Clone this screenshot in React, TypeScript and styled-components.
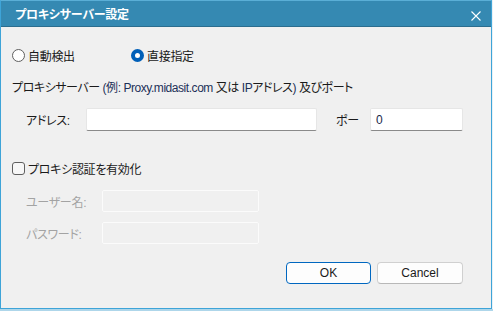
import styled, { createGlobalStyle } from "styled-components";

const GlobalStyle = createGlobalStyle`
  html, body {
    margin: 0;
    padding: 0;
    background: #e9f1f5;
  }
  body {
    font-family: "Liberation Sans", "Noto Sans CJK JP", sans-serif;
    font-size: 12px;
    color: #1a1a1a;
    font-feature-settings: "palt";
    letter-spacing: -0.3px;
  }
`;

export default function App() {
  return (
    <>
      <GlobalStyle />
      <Page>
        <Window>
          <TitleBar>
            <TitleText>プロキシサーバー設定</TitleText>
            <CloseIcon width="10" height="10" viewBox="0 0 10 10">
              <path d="M0.5 0.5 L9.5 9.5 M9.5 0.5 L0.5 9.5" stroke="#fff" strokeWidth="1.1" />
            </CloseIcon>
          </TitleBar>
          <Body>
            <RadioRow>
              <RadioItem $width={119}>
                <Radio $checked={false} />
                <span>自動検出</span>
              </RadioItem>
              <RadioItem>
                <Radio $checked />
                <span>直接指定</span>
              </RadioItem>
            </RadioRow>

            <ProxyLabel>
              プロキシサーバー <Example>(例: Proxy.midasit.com</Example> 又は{" "}
              <Example>IP</Example>アドレス<Example>)</Example> 及びポート
            </ProxyLabel>

            <FieldRow $top={12}>
              <FieldLabel $width={60}>アドレス:</FieldLabel>
              <TextInput $width={231} />
              <FieldLabel $width={34} style={{ marginLeft: 19 }}>
                ポー
              </FieldLabel>
              <TextInput $width={93}>0</TextInput>
            </FieldRow>

            <CheckRow>
              <CheckBox />
              <span>プロキシ認証を有効化</span>
            </CheckRow>

            <FieldRow $top={15}>
              <FieldLabel $width={76} $disabled>
                ユーザー名:
              </FieldLabel>
              <TextInput $width={157} $disabled />
            </FieldRow>

            <FieldRow $top={10}>
              <FieldLabel $width={76} $disabled>
                パスワード:
              </FieldLabel>
              <TextInput $width={157} $disabled />
            </FieldRow>

            <ButtonRow>
              <DialogButton $primary>OK</DialogButton>
              <DialogButton>Cancel</DialogButton>
            </ButtonRow>
          </Body>
        </Window>
        <BottomStrip />
      </Page>
    </>
  );
}

const Page = styled.div`
  width: 493px;
  height: 311px;
  overflow: hidden;
`;

const Window = styled.div`
  width: 492px;
  height: 309px;
  box-sizing: border-box;
  border: 1px solid #3ea4d8;
  border-top-color: #5aaed6;
  background: #f0f0f0;
  display: flex;
  flex-direction: column;
`;

const TitleBar = styled.div`
  height: 25px;
  flex-shrink: 0;
  background: #3589b2;
  border-bottom: 1px solid #2b6d8e;
  display: flex;
  align-items: center;
  justify-content: space-between;
  padding: 0 10px 0 14px;
`;

const TitleText = styled.span`
  color: #fff;
  font-family: "Noto Sans CJK JP", sans-serif;
  font-weight: 700;
  font-size: 12px;
  letter-spacing: -0.2px;
`;

const CloseIcon = styled.svg`
  display: block;
  margin-top: 5px;
`;

const Body = styled.div`
  flex: 1;
  display: flex;
  flex-direction: column;
  padding: 0 28px 0 11px;
`;

const RadioRow = styled.div`
  margin-top: 21px;
  height: 14px;
  display: flex;
  align-items: center;
`;

const RadioItem = styled.label<{ $width?: number }>`
  display: flex;
  align-items: center;
  gap: 3px;
  width: ${(p) => (p.$width ? `${p.$width}px` : "auto")};
  font-size: 12px;
`;

const Radio = styled.span<{ $checked: boolean }>`
  width: 13px;
  height: 13px;
  box-sizing: border-box;
  border-radius: 50%;
  border: ${(p) => (p.$checked ? "4px solid #005fb8" : "1px solid #5f5f5f")};
  background: #fff;
  flex-shrink: 0;
`;

const ProxyLabel = styled.div`
  margin-top: 18px;
  height: 16px;
  line-height: 16px;
  font-size: 12px;
  letter-spacing: -0.45px;
  white-space: nowrap;
`;

const Example = styled.span`
  color: #1d3158;
`;

const FieldRow = styled.div<{ $top: number }>`
  margin-top: ${(p) => p.$top}px;
  display: flex;
  align-items: center;
  padding-left: 14px;
`;

const FieldLabel = styled.span<{ $width: number; $disabled?: boolean }>`
  width: ${(p) => p.$width}px;
  flex-shrink: 0;
  font-size: 12px;
  color: ${(p) => (p.$disabled ? "#a3a3a3" : "#1a1a1a")};
`;

const TextInput = styled.div<{ $width: number; $disabled?: boolean }>`
  width: ${(p) => p.$width}px;
  height: ${(p) => (p.$disabled ? 22 : 23)}px;
  box-sizing: border-box;
  border-radius: 2px;
  padding: 0 5px;
  display: flex;
  align-items: center;
  font-size: 12px;
  color: #1a2a4a;
  background: ${(p) => (p.$disabled ? "#f0f0f0" : "#fff")};
  border: 1px solid ${(p) => (p.$disabled ? "#fbfbfb" : "#e6e6e6")};
  border-bottom-color: ${(p) => (p.$disabled ? "#fbfbfb" : "#8a8a8a")};
`;

const CheckRow = styled.label`
  margin-top: 30px;
  height: 14px;
  display: flex;
  align-items: center;
  gap: 3px;
  font-size: 12px;
`;

const CheckBox = styled.span`
  width: 13px;
  height: 13px;
  box-sizing: border-box;
  border: 1px solid #5f5f5f;
  border-radius: 3px;
  background: #f7f7f7;
  flex-shrink: 0;
`;

const ButtonRow = styled.div`
  margin-top: 18px;
  display: flex;
  justify-content: flex-end;
  gap: 6px;
`;

const DialogButton = styled.button<{ $primary?: boolean }>`
  width: ${(p) => (p.$primary ? 85 : 86)}px;
  height: 22px;
  box-sizing: border-box;
  border-radius: 4px;
  background: #fdfdfd;
  border: 1px solid ${(p) => (p.$primary ? "#0067c0" : "#d0d0d0")};
  border-bottom-color: ${(p) => (p.$primary ? "#0067c0" : "#b8b8b8")};
  font-family: "Liberation Sans", "Noto Sans CJK JP", sans-serif;
  font-size: 12px;
  color: #1a1a1a;
  padding: 0;
`;

const BottomStrip = styled.div`
  height: 2px;
  background: #aed6ea;
`;
